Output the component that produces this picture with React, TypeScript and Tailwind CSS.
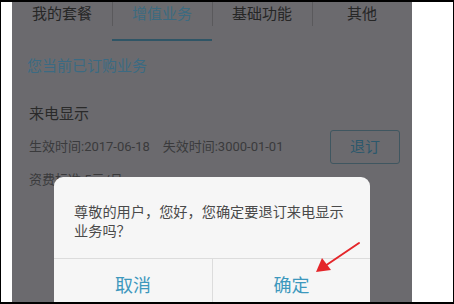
import React from "react";

export default function App() {
  const tabs = ["我的套餐", "增值业务", "基础功能", "其他"];
  return (
    <div
      className="relative w-[454px] h-[304px] bg-black pt-[2px] pb-[2px] pl-[1px] pr-[1px] overflow-hidden"
      style={{ fontFamily: 'Roboto, "Noto Sans CJK SC", "Noto Sans", sans-serif' }}
    >
      <div className="w-full h-full bg-white flex pl-[11px]">
        <div className="relative w-[400px] h-full bg-[#6b6a6e] overflow-hidden">
          {/* tabs */}
          <div className="flex h-[37px]">
            {tabs.map((t, i) => (
              <div
                key={t}
                className={`relative w-[100px] flex justify-center pt-[2px] text-[15px] leading-[20px] ${
                  i === 1 ? "text-[#3c6a80]" : "text-[#262626]"
                }`}
              >
                {i > 0 && (
                  <div className="absolute left-0 top-0 h-[24px] w-px bg-[#5a595c]" />
                )}
                {t}
                {i === 1 && (
                  <div className="absolute left-0 bottom-[-2px] h-[2px] w-full bg-[#2f5566]" />
                )}
              </div>
            ))}
          </div>
          <div className="pl-[15px] pt-[17px] text-[15px] leading-[20px] text-[#3b6a82]">
            您当前已订购业务
          </div>
          <div className="pl-[17px] pt-[28px] text-[15px] leading-[20px] text-[#2a2a2a]">
            来电显示
          </div>
          <div className="flex items-center pl-[17px] pr-[12px] mt-[6px]">
            <div className="flex-1 text-[13px] leading-[18px] text-[#3a3a3c]">
              生效时间:2017-06-18&nbsp;&nbsp;&nbsp;&nbsp;失效时间:3000-01-01
            </div>
            <div className="w-[70px] h-[34px] border border-[#3f5660] rounded-[3px] flex items-center justify-center text-[15px] text-[#2c586c]">
              退订
            </div>
          </div>
          <div className="pl-[17px] pt-[7px] text-[13px] leading-[18px] text-[#3a3a3c]">
            资费标准:5元/月
          </div>

          {/* dialog */}
          <div className="absolute left-[42px] top-[175px] w-[316px] h-[140px] rounded-[9px] bg-[#f6f6f6] flex flex-col overflow-hidden">
            <div className="h-[81px] px-[20px] pt-[26px] text-[14.2px] leading-[19px] text-[#4a4a4a]">
              尊敬的用户，您好，您确定要退订来电显示业务吗？
            </div>
            <div className="flex border-t border-[#dcdcdc] flex-1">
              <div className="w-[158px] flex justify-center pt-[15px] text-[18px] leading-[24px] text-[#3d98bd]">
                取消
              </div>
              <div className="w-px bg-[#dcdcdc]" />
              <div className="flex-1 flex justify-center pt-[15px] text-[18px] leading-[24px] text-[#3d98bd]">
                确定
              </div>
            </div>
          </div>
        </div>
      </div>
      {/* red arrow annotation */}
      <svg
        className="absolute left-0 top-0 pointer-events-none"
        width="454"
        height="304"
        viewBox="0 0 454 304"
      >
        <line x1="359" y1="243" x2="325" y2="266" stroke="#e4262a" strokeWidth="2" strokeLinecap="round" />
        <polygon points="316,272 322,258 331,270" fill="#e4262a" />
      </svg>
    </div>
  );
}
